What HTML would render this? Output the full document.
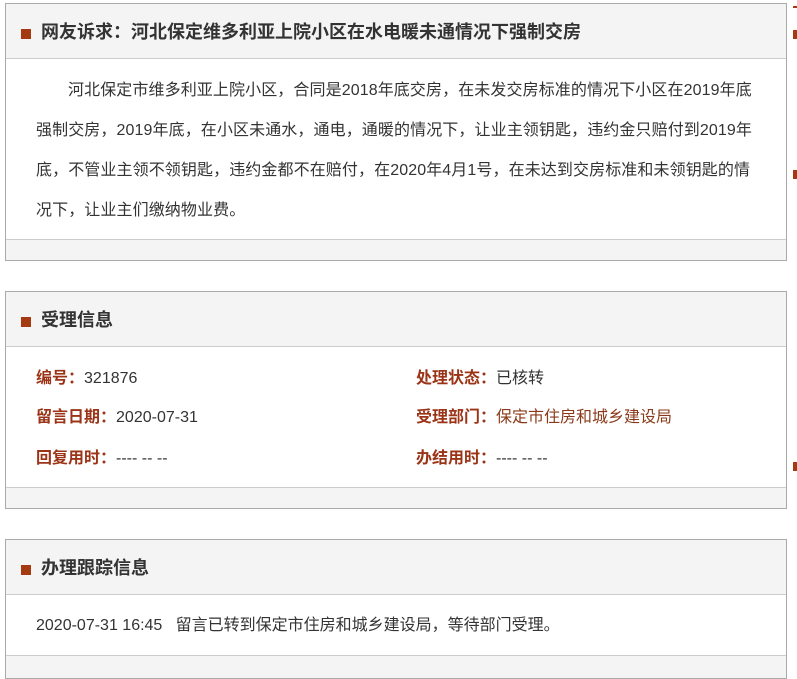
<!DOCTYPE html>
<html><head><meta charset="utf-8"><style>
*{margin:0;padding:0;box-sizing:border-box}
body{width:797px;height:664px;overflow:hidden;background:#fff;font-family:"Liberation Sans","Noto Sans CJK SC",sans-serif;color:#333;position:relative}
.p{position:absolute;left:5px;width:782px;border:1px solid #aaa;background:#f4f4f4}
.h{height:55px;border-bottom:1px solid #ccc;position:relative;font-weight:bold;font-size:18px;line-height:57px;padding-left:35px;color:#333}
.h:before{content:"";position:absolute;left:15px;top:25px;width:10px;height:10px;background:#a33a12}
.b{background:#fff;border-bottom:1px solid #ccc;position:relative}
.t{font-size:16px;line-height:40px;text-indent:32px;padding:12px 28px 10px 30px;letter-spacing:0.1px}
.r{position:absolute;font-size:16px;line-height:20px}
.l{color:#9b3417;font-weight:bold}
.m{position:absolute;left:793px;width:4px;background:#a33a12}
</style></head><body>
<div class="p" style="top:3px;height:258px">
<div class="h">网友诉求：河北保定维多利亚上院小区在水电暖未通情况下强制交房</div>
<div class="b" style="height:181px"><div class="t">河北保定市维多利亚上院小区，合同是2018年底交房，在未发交房标准的情况下小区在2019年底强制交房，2019年底，在小区未通水，通电，通暖的情况下，让业主领钥匙，违约金只赔付到2019年底，不管业主领不领钥匙，违约金都不在赔付，在2020年4月1号，在未达到交房标准和未领钥匙的情况下，让业主们缴纳物业费。</div></div>
</div>
<div class="p" style="top:291px;height:218px">
<div class="h">受理信息</div>
<div class="b" style="height:141px">
<div class="r" style="left:30px;top:22px"><span class="l">编号：</span>321876</div>
<div class="r" style="left:30px;top:61px"><span class="l">留言日期：</span>2020-07-31</div>
<div class="r" style="left:30px;top:102px"><span class="l">回复用时：</span>---- -- --</div>
<div class="r" style="left:410px;top:22px"><span class="l">处理状态：</span>已核转</div>
<div class="r" style="left:410px;top:61px"><span class="l">受理部门：</span><span style="color:#8a3a1a">保定市住房和城乡建设局</span></div>
<div class="r" style="left:410px;top:102px"><span class="l">办结用时：</span>---- -- --</div>
</div></div>
<div class="p" style="top:539px;height:140px">
<div class="h">办理跟踪信息</div>
<div class="b" style="height:61px"><div class="r" style="left:30px;top:21px">2020-07-31 16:45&nbsp;&nbsp;&nbsp;留言已转到保定市住房和城乡建设局，等待部门受理。</div></div>
</div>
<div class="m" style="top:6px;height:2px"></div>
<div class="m" style="top:30px;height:9px"></div>
<div class="m" style="top:170px;height:9px"></div>
<div class="m" style="top:462px;height:9px"></div>
</body></html>
